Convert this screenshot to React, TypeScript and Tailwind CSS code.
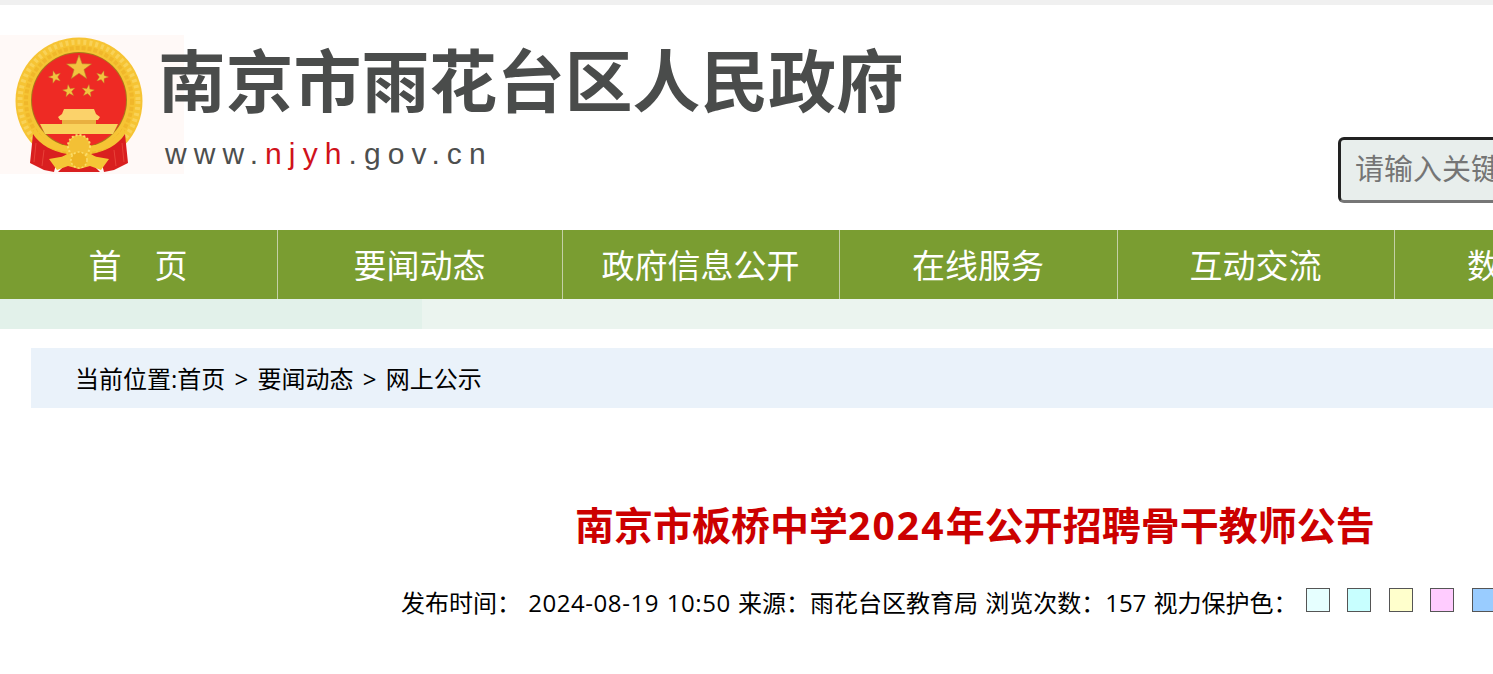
import React from "react";

const navItems = [
  { label: "首　页", width: "w-[278px]" },
  { label: "要闻动态", width: "w-[285px]" },
  { label: "政府信息公开", width: "w-[277px]" },
  { label: "在线服务", width: "w-[278px]" },
  { label: "互动交流", width: "w-[277px]" },
  { label: "数据发布", width: "w-[277px]" },
];

const swatches = ["bg-[#e6ffff]", "bg-[#c8ffff]", "bg-[#ffffcc]", "bg-[#ffccff]", "bg-[#99ccff]"];

function starPoints(cx: number, cy: number, r: number, rot = 0) {
  const pts: string[] = [];
  for (let i = 0; i < 10; i++) {
    const rad = i % 2 === 0 ? r : r * 0.4;
    const a = -Math.PI / 2 + rot + (i * Math.PI) / 5;
    pts.push(`${(cx + rad * Math.cos(a)).toFixed(1)},${(cy + rad * Math.sin(a)).toFixed(1)}`);
  }
  return pts.join(" ");
}

// national emblem, drawn at the size of the header tile
function Emblem() {
  return (
    <svg viewBox="0 35 184 139" className="w-[184px] h-[139px] block">
      {/* wreath */}
      <circle cx="79" cy="101" r="63.5" fill="#f6c434" />
      <circle cx="79" cy="101" r="59" fill="none" stroke="#f9d257" strokeWidth="5" strokeDasharray="3 3" />
      <circle cx="79" cy="101" r="53" fill="none" stroke="#f0b72a" strokeWidth="4" strokeDasharray="4 2" />
      {/* red disc */}
      <circle cx="79" cy="100" r="48" fill="#a8791a" />
      <circle cx="79" cy="100" r="47" fill="#ee2a24" />
      <polygon points={starPoints(79, 68, 13)} fill="#f3c33f" stroke="#b98a2a" strokeWidth="0.6" />
      <polygon points={starPoints(55, 77, 6.5, -0.3)} fill="#f3c33f" stroke="#b98a2a" strokeWidth="0.4" />
      <polygon points={starPoints(102, 77, 6.5, 0.3)} fill="#f3c33f" stroke="#b98a2a" strokeWidth="0.4" />
      <polygon points={starPoints(69, 91, 6.5, -0.15)} fill="#f3c33f" stroke="#b98a2a" strokeWidth="0.4" />
      <polygon points={starPoints(88, 91, 6.5, 0.15)} fill="#f3c33f" stroke="#b98a2a" strokeWidth="0.4" />
      {/* gate */}
      <path d="M64 109 H94 L96 114 L100 117 L98 120 H60 L58 117 L62 114 Z" fill="#fbd26a" />
      <path d="M62 120 H96 V124 H62 Z" fill="#e9b040" />
      <path d="M40 124 H118 L113 134 H45 Z" fill="#f9d25c" />
      {/* drapes sit over the lower wreath */}
      <path d="M33 134 C40 145 54 152 67 154 L57 160 L54 172 L44 170 L30 163 Z" fill="#d91f1f" />
      <path d="M125 134 C118 145 104 152 91 154 L101 160 L104 172 L114 170 L128 163 Z" fill="#d91f1f" />
      <path d="M58 172 L68 162 L90 162 L100 172 Z" fill="#d91f1f" />
      <path d="M36 143 L34 162 M44 150 L42 166 M122 143 L124 162 M114 150 L116 166" stroke="#f25a4a" strokeWidth="1" opacity="0.6" />
      {/* bottom band, gear and ribbon */}
      <path d="M33 132 C44 152 66 152 79 152 C92 152 114 152 125 132 L123 128 C112 146 92 146 79 146 C66 146 46 146 35 128 Z" fill="#f6c434" />
      <path d="M49 159 L66 156 L72 152 H86 L92 156 L109 159 L101 170 L90 166 L79 169 L68 166 L57 170 Z" fill="#f5c636" />
      <circle cx="79" cy="146" r="11" fill="#f3c035" stroke="#fbdc6a" strokeWidth="2" strokeDasharray="2 2" />
      <circle cx="79" cy="160" r="8" fill="#eeb424" stroke="#fbdc6a" strokeWidth="1.5" strokeDasharray="2 2" />
    </svg>
  );
}

function Header() {
  return (
    <div className="flex items-start h-[225px]">
      <div className="w-[1338px] shrink-0 pt-[30px] flex items-start">
        <div className="bg-[#fff9f7] shrink-0">
          <Emblem />
        </div>
        <div className="-ml-[26px] relative">
          <div className="font-['Noto_Sans_CJK_SC',sans-serif] font-bold text-[67.8px] leading-[96px] -mt-[5px] text-[#4a4c4b] whitespace-nowrap">
            南京市雨花台区人民政府
          </div>
          <div className="font-['Liberation_Sans',sans-serif] text-[30px] leading-[34px] tracking-[7.1px] text-[#4d4f4e] ml-[7px] mt-[11px] whitespace-nowrap">
            www.<span className="text-[#d0121b]">njyh</span>.gov.cn
          </div>
        </div>
      </div>
      <input
        placeholder="请输入关键字"
        className="mt-[132px] w-[300px] h-[66px] shrink-0 rounded-[6px] border-[3px] border-t-[#222222] border-l-[#222222] border-r-[#222222] border-b-[#767676] bg-[#e8eeec] pl-[14px] pb-[3px] text-[29px] placeholder:text-[#757575] outline-none"
      />
    </div>
  );
}

export default function App() {
  return (
    <div className="w-[1493px] h-[674px] overflow-hidden bg-white text-black font-['Open_Sans','Noto_Sans_CJK_SC',sans-serif]">
      <div className="h-[5px] bg-[#f0f0f0]" />
      <Header />

      <div className="flex h-[69px] bg-[#7a9d31] text-white text-[33px] font-['Noto_Sans_CJK_SC',sans-serif]">
        {navItems.map((item, i) => (
          <div
            key={item.label}
            className={`${item.width} shrink-0 flex items-center justify-center pr-[1px] whitespace-nowrap ${
              i < navItems.length - 1 ? "border-r border-[#c4d0a6]" : ""
            }`}
          >
            {item.label}
          </div>
        ))}
      </div>

      <div className="h-[30px] bg-[#ebf4ef]">
        <div className="w-[422px] h-full bg-[#e2f1ea]" />
      </div>

      <div className="ml-[31px] mt-[19px] h-[60px] bg-[#eaf2fa] pl-[44px] pt-[1px] flex items-center text-[24px] [word-spacing:3px] whitespace-nowrap">
        当前位置:首页 &gt; 要闻动态 &gt; 网上公示
      </div>

      <h1 className="mt-[88px] pl-[575px] text-[39px] leading-[58px] font-bold text-[#cc0000] whitespace-nowrap">
        南京市板桥中学<span className="tracking-[2.1px]">2024</span>年公开招聘骨干教师公告
      </h1>

      <div className="mt-[31px] pl-[401px] flex items-center text-[24px] leading-[36px] [word-spacing:1px] whitespace-nowrap">
        <span>
          发布时间： <span className="tracking-[0.55px]">2024-08-19 10:50</span> 来源：雨花台区教育局 浏览次数：157 视力保护色：
        </span>
        <div className="flex ml-[8px] -mt-[6px] gap-[17.5px]">
          {swatches.map((color) => (
            <span key={color} className={`${color} block w-[24px] h-[24px] border border-[#555555] shrink-0`} />
          ))}
        </div>
      </div>
    </div>
  );
}
